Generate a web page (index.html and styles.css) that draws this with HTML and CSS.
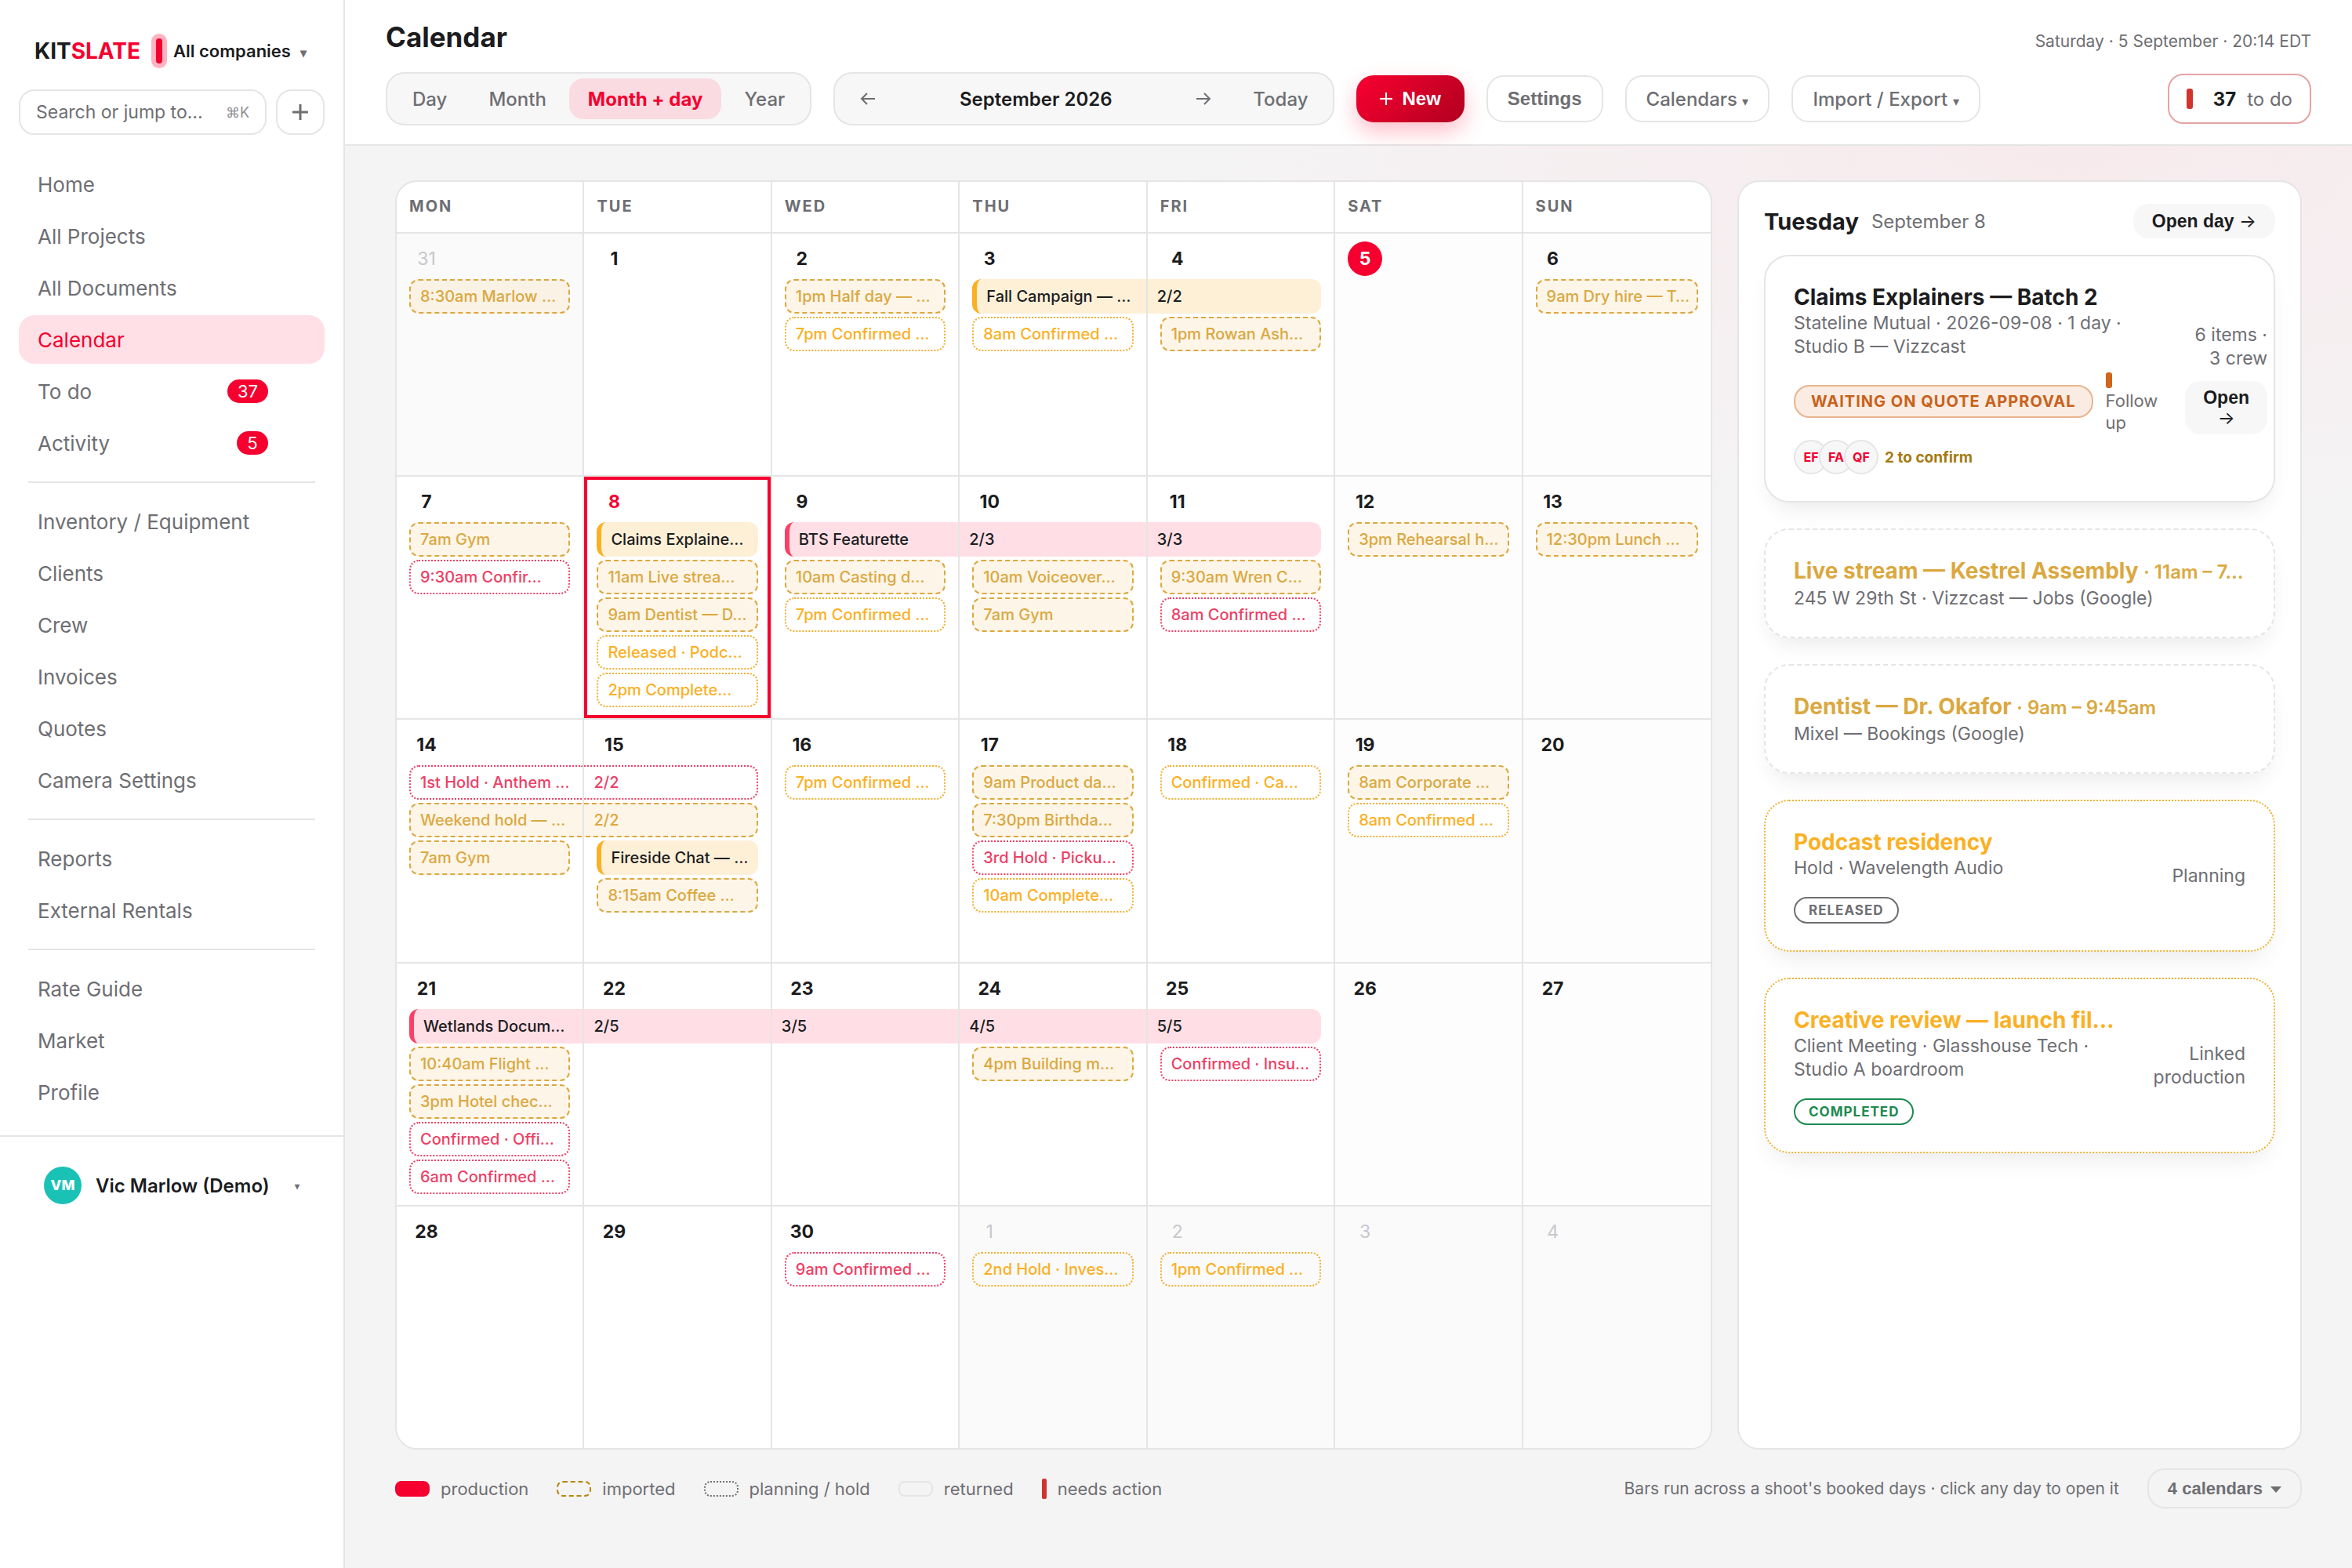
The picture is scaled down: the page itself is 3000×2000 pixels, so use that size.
FILE: index.html
```html
<!DOCTYPE html>
<html lang="en">
<head>
    <meta charset="UTF-8">
    <meta name="viewport" content="width=device-width, initial-scale=1.0">
    <title>Calendar - Kitslate</title>
    <link rel="stylesheet" href="styles.css">
</head>
<body>
    <div class="app">
        <aside class="sidebar">
            <div class="brand">
                <span class="logo">KIT<span>SLATE</span></span>
                <span class="tally"></span>
                <button class="company">All companies <span class="caret">▾</span></button>
            </div>
            <div class="search-row">
                <label class="search"><input type="text" placeholder="Search or jump to…" aria-label="Search or jump to"><kbd>⌘K</kbd></label>
                <button class="add" aria-label="Add">
                    <svg width="24" height="24" viewBox="0 0 24 24" fill="none" stroke="currentColor" stroke-width="3"><path d="M12 2v20M2 12h20"/></svg>
                </button>
            </div>
            <nav class="nav">
                <a href="#">Home</a>
                <a href="#">All Projects</a>
                <a href="#">All Documents</a>
                <a href="#" class="active">Calendar</a>
                <a href="#">To do <span class="count">37</span></a>
                <a href="#">Activity <span class="count">5</span></a>
                <hr>
                <a href="#">Inventory / Equipment</a>
                <a href="#">Clients</a>
                <a href="#">Crew</a>
                <a href="#">Invoices</a>
                <a href="#">Quotes</a>
                <a href="#">Camera Settings</a>
                <hr>
                <a href="#">Reports</a>
                <a href="#">External Rentals</a>
                <hr>
                <a href="#">Rate Guide</a>
                <a href="#">Market</a>
                <a href="#">Profile</a>
            </nav>
            <button class="user">
                <span class="user-avatar">VM</span>
                <span class="user-name">Vic Marlow (Demo)</span>
                <span class="caret">▾</span>
            </button>
        </aside>

        <div class="page">
            <header class="header">
                <div class="title-row">
                    <h1>Calendar</h1>
                    <span class="now">Saturday · 5 September · 20:14 EDT</span>
                </div>
                <div class="toolbar">
                    <div class="segmented">
                        <button>Day</button>
                        <button>Month</button>
                        <button class="active">Month + day</button>
                        <button>Year</button>
                    </div>
                    <div class="segmented pager">
                        <button aria-label="Previous"><svg width="20" height="18" viewBox="0 0 20 18" fill="none" stroke="currentColor" stroke-width="2"><path d="M19 9H2M9 2L2 9l7 7"/></svg></button>
                        <strong>September 2026</strong>
                        <button aria-label="Next"><svg width="20" height="18" viewBox="0 0 20 18" fill="none" stroke="currentColor" stroke-width="2"><path d="M1 9h17M11 2l7 7-7 7"/></svg></button>
                        <button>Today</button>
                    </div>
                    <button class="btn primary"><svg width="16" height="16" viewBox="0 0 16 16" fill="none" stroke="currentColor" stroke-width="2"><path d="M8 0v16M0 8h16"/></svg>New</button>
                    <button class="btn bold">Settings</button>
                    <button class="btn">Calendars <span class="caret">▾</span></button>
                    <button class="btn">Import / Export <span class="caret">▾</span></button>
                    <button class="todo"><span class="mark"></span><b>37</b> to do</button>
                </div>
            </header>

            <main class="main">
                <div class="columns">
                    <section class="month">
                        <div class="weekdays">
                            <div>MON</div><div>TUE</div><div>WED</div><div>THU</div><div>FRI</div><div>SAT</div><div>SUN</div>
                        </div>
                        <div class="days">
                            <div class="day out"><span class="num">31</span>
                                <div class="chip imported">8:30am Marlow …</div>
                            </div>
                            <div class="day"><span class="num">1</span></div>
                            <div class="day"><span class="num">2</span>
                                <div class="chip imported">1pm Half day — …</div>
                                <div class="chip planned">7pm Confirmed …</div>
                            </div>
                            <div class="day"><span class="num">3</span>
                                <div class="chip job start">Fall Campaign — …</div>
                                <div class="chip planned">8am Confirmed …</div>
                            </div>
                            <div class="day"><span class="num">4</span>
                                <div class="chip job end">2/2</div>
                                <div class="chip imported">1pm Rowan Ash…</div>
                            </div>
                            <div class="day weekend"><span class="num today">5</span></div>
                            <div class="day weekend"><span class="num">6</span>
                                <div class="chip imported">9am Dry hire — T…</div>
                            </div>

                            <div class="day"><span class="num">7</span>
                                <div class="chip imported">7am Gym</div>
                                <div class="chip planned pink">9:30am Confir…</div>
                            </div>
                            <div class="day selected"><span class="num">8</span>
                                <div class="chip job">Claims Explaine…</div>
                                <div class="chip imported">11am Live strea…</div>
                                <div class="chip imported">9am Dentist — D…</div>
                                <div class="chip planned">Released · Podc…</div>
                                <div class="chip planned">2pm Complete…</div>
                            </div>
                            <div class="day"><span class="num">9</span>
                                <div class="chip job pink start">BTS Featurette</div>
                                <div class="chip imported">10am Casting d…</div>
                                <div class="chip planned">7pm Confirmed …</div>
                            </div>
                            <div class="day"><span class="num">10</span>
                                <div class="chip job pink mid">2/3</div>
                                <div class="chip imported">10am Voiceover…</div>
                                <div class="chip imported">7am Gym</div>
                            </div>
                            <div class="day"><span class="num">11</span>
                                <div class="chip job pink end">3/3</div>
                                <div class="chip imported">9:30am Wren C…</div>
                                <div class="chip planned pink">8am Confirmed …</div>
                            </div>
                            <div class="day weekend"><span class="num">12</span>
                                <div class="chip imported">3pm Rehearsal h…</div>
                            </div>
                            <div class="day weekend"><span class="num">13</span>
                                <div class="chip imported">12:30pm Lunch …</div>
                            </div>

                            <div class="day"><span class="num">14</span>
                                <div class="chip planned pink start">1st Hold · Anthem …</div>
                                <div class="chip imported start">Weekend hold — …</div>
                                <div class="chip imported">7am Gym</div>
                            </div>
                            <div class="day"><span class="num">15</span>
                                <div class="chip planned pink end">2/2</div>
                                <div class="chip imported end">2/2</div>
                                <div class="chip job">Fireside Chat — …</div>
                                <div class="chip imported">8:15am Coffee …</div>
                            </div>
                            <div class="day"><span class="num">16</span>
                                <div class="chip planned">7pm Confirmed …</div>
                            </div>
                            <div class="day"><span class="num">17</span>
                                <div class="chip imported">9am Product da…</div>
                                <div class="chip imported">7:30pm Birthda…</div>
                                <div class="chip planned pink">3rd Hold · Picku…</div>
                                <div class="chip planned">10am Complete…</div>
                            </div>
                            <div class="day"><span class="num">18</span>
                                <div class="chip planned">Confirmed · Ca…</div>
                            </div>
                            <div class="day weekend"><span class="num">19</span>
                                <div class="chip imported">8am Corporate …</div>
                                <div class="chip planned">8am Confirmed …</div>
                            </div>
                            <div class="day weekend"><span class="num">20</span></div>

                            <div class="day"><span class="num">21</span>
                                <div class="chip job pink start">Wetlands Docum…</div>
                                <div class="chip imported">10:40am Flight …</div>
                                <div class="chip imported">3pm Hotel chec…</div>
                                <div class="chip planned pink">Confirmed · Offi…</div>
                                <div class="chip planned pink">6am Confirmed …</div>
                            </div>
                            <div class="day"><span class="num">22</span>
                                <div class="chip job pink mid">2/5</div>
                            </div>
                            <div class="day"><span class="num">23</span>
                                <div class="chip job pink mid">3/5</div>
                            </div>
                            <div class="day"><span class="num">24</span>
                                <div class="chip job pink mid">4/5</div>
                                <div class="chip imported">4pm Building m…</div>
                            </div>
                            <div class="day"><span class="num">25</span>
                                <div class="chip job pink end">5/5</div>
                                <div class="chip planned pink">Confirmed · Insu…</div>
                            </div>
                            <div class="day weekend"><span class="num">26</span></div>
                            <div class="day weekend"><span class="num">27</span></div>

                            <div class="day"><span class="num">28</span></div>
                            <div class="day"><span class="num">29</span></div>
                            <div class="day"><span class="num">30</span>
                                <div class="chip planned pink">9am Confirmed …</div>
                            </div>
                            <div class="day out"><span class="num">1</span>
                                <div class="chip planned">2nd Hold · Inves…</div>
                            </div>
                            <div class="day out"><span class="num">2</span>
                                <div class="chip planned">1pm Confirmed …</div>
                            </div>
                            <div class="day out"><span class="num">3</span></div>
                            <div class="day out"><span class="num">4</span></div>
                        </div>
                    </section>

                    <aside class="panel">
                        <div class="panel-head">
                            <h2>Tuesday</h2>
                            <span>September 8</span>
                            <button class="open">Open day <span>→</span></button>
                        </div>

                        <article class="card tight">
                            <div class="card-body">
                                <h3>Claims Explainers — Batch 2</h3>
                                <p>Stateline Mutual · 2026-09-08 · 1 day ·<br>Studio B — Vizzcast</p>
                                <div class="status-row">
                                    <span class="pill waiting">WAITING ON QUOTE APPROVAL</span>
                                    <span class="follow"><i></i>Follow<br>up</span>
                                </div>
                                <div class="crew">
                                    <span>EF</span><span>FA</span><span>QF</span>
                                    <b>2 to confirm</b>
                                </div>
                            </div>
                            <div class="card-side">
                                <p>6 items ·<br>3 crew</p>
                                <button class="open">Open<br><span>→</span></button>
                            </div>
                        </article>

                        <article class="card external">
                            <div class="card-body">
                                <h3>Live stream — Kestrel Assembly <small>· 11am – 7…</small></h3>
                                <p>245 W 29th St · Vizzcast — Jobs (Google)</p>
                            </div>
                        </article>

                        <article class="card external">
                            <div class="card-body">
                                <h3>Dentist — Dr. Okafor <small>· 9am – 9:45am</small></h3>
                                <p>Mixel — Bookings (Google)</p>
                            </div>
                        </article>

                        <article class="card plan">
                            <div class="card-body">
                                <h3>Podcast residency</h3>
                                <p>Hold · Wavelength Audio</p>
                                <span class="pill">RELEASED</span>
                            </div>
                            <div class="card-side"><p>Planning</p></div>
                        </article>

                        <article class="card plan">
                            <div class="card-body">
                                <h3>Creative review — launch fil…</h3>
                                <p>Client Meeting · Glasshouse Tech ·<br>Studio A boardroom</p>
                                <span class="pill done">COMPLETED</span>
                            </div>
                            <div class="card-side"><p>Linked<br>production</p></div>
                        </article>
                    </aside>
                </div>

                <footer class="legend">
                    <span><i class="swatch production"></i>production</span>
                    <span><i class="swatch import"></i>imported</span>
                    <span><i class="swatch hold"></i>planning / hold</span>
                    <span><i class="swatch"></i>returned</span>
                    <span><i class="needs"></i>needs action</span>
                    <span class="hint">Bars run across a shoot's booked days · click any day to open it</span>
                    <button class="calendars">4 calendars <svg width="14" height="8" viewBox="0 0 14 8" fill="currentColor"><path d="M0 0h14L7 8z"/></svg></button>
                </footer>
            </main>
        </div>
    </div>
</body>
</html>
```
FILE: styles.css
```css
* { margin: 0; padding: 0; box-sizing: border-box; }
body { font-family: Inter, "Open Sans", sans-serif; font-size: 24px; color: #1c1c1e; background: #f4f4f4; }
button { font: inherit; color: inherit; background: none; border: none; cursor: pointer; white-space: nowrap; }
a { color: inherit; text-decoration: none; }

.app { display: flex; min-height: 100vh; }
.caret { font-size: 16px; color: #6e6e73; }

/* sidebar */
.sidebar { width: 440px; flex-shrink: 0; background: #fff; border-right: 2px solid #e5e5e5; padding-top: 42px; }
.brand { display: flex; align-items: center; height: 46px; padding-left: 44px; }
.logo { font-size: 28px; font-weight: 700; }
.logo span { color: #f5002f; }
.tally { width: 8px; height: 32px; margin: 0 14px 0 20px; border-radius: 4px; background: #f5002f; box-shadow: 0 0 0 6px #ffb3c1; }
.company { font-size: 22px; font-weight: 600; }
.company .caret { margin-left: 6px; }
.search-row { display: flex; gap: 12px; padding: 26px 24px 0; }
.search, .add { height: 58px; border: 2px solid #e5e5e5; border-radius: 20px; color: #6e6e73; }
.search { flex: 1; min-width: 0; display: flex; align-items: center; padding: 0 20px; }
.search input { flex: 1; min-width: 0; width: 100%; border: none; outline: none; background: none; font: inherit; font-size: 23px; }
.search input::placeholder { color: #6e6e73; opacity: 1; }
.search kbd { font-family: Inter, sans-serif; font-size: 18px; color: #8e8e93; }
.add { width: 62px; flex-shrink: 0; display: flex; align-items: center; justify-content: center; }
.nav { display: flex; flex-direction: column; gap: 4px; padding: 32px 24px 24px; }
.nav a { display: flex; align-items: center; justify-content: space-between; height: 62px; padding: 0 72px 0 24px; border-radius: 20px; font-size: 26px; color: #6e6e73; }
.nav a.active { background: #ffe0e6; color: #f5002f; }
.nav hr { border: none; height: 2px; margin: 14px 12px; background: #e5e5e5; }
.count { min-width: 40px; height: 30px; padding: 0 13px; border-radius: 15px; background: #f5002f; color: #fff; font-size: 22px; line-height: 30px; text-align: center; }
.user { display: flex; align-items: center; width: 100%; padding: 38px 56px; border-top: 2px solid #e5e5e5; font-weight: 600; }
.user-avatar { width: 48px; height: 48px; border-radius: 50%; background: #1ac2b5; color: #fff; font-size: 18px; font-weight: 800; line-height: 48px; margin-right: 18px; }
.user .caret { margin-left: auto; font-size: 12px; }

/* header */
.page { flex: 1; min-width: 0; display: flex; flex-direction: column; }
.header { background: #fff; border-bottom: 2px solid #e5e5e5; padding: 24px 52px; }
.title-row { display: flex; align-items: baseline; justify-content: space-between; margin-bottom: 22px; }
h1 { font-size: 35px; font-weight: 700; line-height: 46px; }
.now { font-size: 21px; color: #6e6e73; }
.toolbar { display: flex; align-items: center; gap: 28px; }
.segmented { display: flex; align-items: center; gap: 5px; height: 68px; padding: 0 8px; border: 2px solid #e5e5e5; border-radius: 24px; background: #f7f7f7; color: #6e6e73; }
.segmented button { height: 52px; padding: 0 24px; border-radius: 18px; font-weight: 500; }
.segmented button.active { background: #f9dbe1; color: #f5002f; font-weight: 700; }
.pager strong { width: 350px; text-align: center; font-weight: 600; color: #1c1c1e; }
.btn { height: 60px; padding: 0 25px; border: 2px solid #e5e5e5; border-radius: 22px; color: #6e6e73; font-weight: 500; }
.btn.bold { font-family: "Liberation Sans", sans-serif; font-weight: 700; }
.btn.primary { display: flex; align-items: center; gap: 12px; padding: 0 30px; border: none; color: #fff; background: linear-gradient(135deg, #fa0030, #b00020); box-shadow: 0 12px 28px rgba(250, 0, 48, .25); font-family: "Liberation Sans", sans-serif; font-weight: 700; }
.todo { display: flex; align-items: center; height: 64px; margin-left: auto; padding: 0 22px; border: 2px solid #e5a3a3; border-radius: 20px; color: #6e6e73; }
.todo .mark { width: 8px; height: 26px; border-radius: 3px; background: #d0342c; margin-right: 26px; }
.todo b { color: #1c1c1e; margin-right: 14px; }

/* month grid */
.main { flex: 1; padding: 44px 64px 76px; display: flex; flex-direction: column; background: radial-gradient(ellipse 1200px 520px at 86% 0, #f7eaed, #f4f4f4); }
.columns { flex: 1; display: grid; grid-template-columns: 7fr 3fr; gap: 32px; }
.month { display: flex; flex-direction: column; border: 2px solid #e5e5e5; border-radius: 28px; background: #fff; overflow: hidden; }
.weekdays, .days { display: grid; grid-template-columns: repeat(7, 1fr); }
.weekdays div { height: 64px; padding-left: 16px; border-right: 2px solid #e5e5e5; font-size: 20px; font-weight: 700; line-height: 62px; letter-spacing: 2px; color: #6e6e73; }
.days { flex: 1; grid-auto-rows: 1fr; }
.day { min-width: 0; display: flex; flex-direction: column; gap: 4px; padding: 10px 16px; border-top: 2px solid #e5e5e5; border-right: 2px solid #e5e5e5; }
.weekdays div:last-child, .day:nth-child(7n) { border-right: none; }
.day.weekend { background: #fdfdfd; }
.day.out { background: #fafafa; }
.day.out .num { color: #c7c7cc; font-weight: 400; }
.day.selected { box-shadow: inset 0 0 0 4px #f5002f; }
.day.selected .num { color: #f5002f; }
.num { width: 44px; height: 44px; border-radius: 50%; font-size: 23px; font-weight: 700; line-height: 44px; text-align: center; }
.num.today { background: #f5002f; color: #fff; }

.chip { height: 44px; padding: 0 12px; border: 2px solid; border-radius: 12px; font-size: 20px; font-weight: 500; line-height: 40px; white-space: nowrap; overflow: hidden; }
.imported { border-style: dashed; border-color: #dba840; background: #fdf5e8; color: #dba840; }
.planned { border-style: dotted; border-color: #f0b030; background: #fff; color: #fbb024; }
.planned.pink { border-color: #ee3f66; color: #ee3f66; }
.day.out .chip { background-color: transparent; }
.day.out .imported { background: #f9f2e5; }
.job { border: none; border-left: 6px solid #fbb024; background: #fef0d7; color: #1c1c1e; line-height: 44px; }
.job.pink { border-color: #fb3f66; background: #ffdfe5; }
.start, .mid { margin-right: -16px; border-right: none; border-top-right-radius: 0; border-bottom-right-radius: 0; }
.mid, .end { margin-left: -16px; border-left: none; border-top-left-radius: 0; border-bottom-left-radius: 0; }

/* day panel */
.panel { display: flex; flex-direction: column; gap: 33px; padding: 28px 32px; border: 2px solid #e5e5e5; border-radius: 28px; background: #fff; }
.panel-head { display: flex; align-items: center; margin-bottom: -12px; color: #6e6e73; }
h2 { font-size: 29px; font-weight: 700; color: #1c1c1e; margin-right: 16px; }
.open { margin-left: auto; padding: 0 24px; border-radius: 20px; background: #f7f7f7; color: #1c1c1e; font-family: "Liberation Sans", sans-serif; font-size: 23px; font-weight: 700; line-height: 44px; }
.open span { font-family: Inter, sans-serif; font-weight: 400; }
.card { display: flex; align-items: center; justify-content: space-between; padding: 34px 36px; border: 2px solid #e5e5e5; border-radius: 32px; background: #fff; box-shadow: 0 16px 32px -12px rgba(0, 0, 0, .1); }
.card.tight { padding-right: 8px; }
.card.external { border-style: dashed; }
.card.plan { border: 2px dotted #f0b030; }
.card h3 { font-size: 28px; font-weight: 700; line-height: 36px; white-space: nowrap; }
.card.external h3 { color: #dba840; }
.card.plan h3 { color: #fbb024; }
.card small { font-size: 24px; font-weight: 600; }
.card p { font-size: 23px; line-height: 30px; color: #6e6e73; white-space: nowrap; }
.pill { display: inline-block; margin-top: 22px; padding: 0 17px; border: 2px solid #6e6e73; border-radius: 20px; font-size: 17px; font-weight: 700; line-height: 30px; letter-spacing: 1px; color: #6e6e73; vertical-align: top; white-space: nowrap; }
.pill.done { border-color: #1c8a50; color: #1c8a50; }
.pill.waiting { margin: 0; padding: 0 20px; border-color: #e8b48e; background: #faece2; color: #c8621b; font-size: 20px; line-height: 38px; }
.status-row { display: flex; align-items: baseline; gap: 16px; margin-top: 18px; }
.follow { font-size: 22px; line-height: 28px; color: #6e6e73; }
.follow i { display: block; width: 8px; height: 20px; border-radius: 3px; background: #d0651b; margin-bottom: 2px; }
.crew { display: flex; align-items: center; margin-top: 8px; }
.crew span { width: 44px; height: 44px; margin-right: -12px; border: 2px solid #e5e5e5; border-radius: 50%; background: #f7f7f7; color: #f5002f; font-size: 16px; font-weight: 700; line-height: 40px; text-align: center; }
.crew b { margin-left: 20px; font-size: 19px; color: #a37a10; }
.card-side { text-align: right; }
.card-side .open { margin-top: 14px; padding: 8px 23px; line-height: 26px; }

/* legend */
.legend { display: flex; align-items: center; gap: 36px; margin-top: 24px; font-size: 22px; color: #6e6e73; }
.legend span { display: flex; align-items: center; white-space: nowrap; }
.swatch { width: 44px; height: 20px; margin-right: 14px; border: 2px solid #e5e5e5; border-radius: 8px; }
.swatch.production { border-color: #f5002f; background: #f5002f; }
.swatch.import { border: 2px dashed #b8860b; }
.swatch.hold { border: 2px dotted #6e6e73; }
.needs { width: 6px; height: 26px; margin-right: 14px; border-radius: 2px; background: #d0342c; }
.legend .hint { margin-left: auto; font-size: 21px; }
.calendars { height: 51px; padding: 0 24px; border: 2px solid #e5e5e5; border-radius: 22px; font-family: "Liberation Sans", sans-serif; font-weight: 700; }
.calendars svg { margin-left: 4px; vertical-align: middle; }
```
